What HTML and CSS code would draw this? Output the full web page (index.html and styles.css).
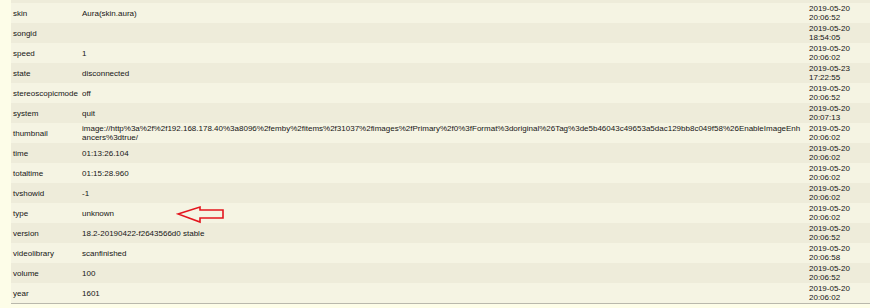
FILE: index.html
```html
<!DOCTYPE html>
<html>
<head>
<meta charset="utf-8">
<link rel="stylesheet" href="styles.css">
</head>
<body>
<div class="page">
  <table class="props">
    <colgroup>
      <col class="c-key">
      <col class="c-val">
      <col class="c-date">
    </colgroup>
    <tbody>
      <tr class="cut"><td></td><td></td><td></td></tr>
      <tr><td>skin</td><td>Aura(skin.aura)</td><td>2019-05-20<br>20:06:52</td></tr>
      <tr><td>songid</td><td></td><td>2019-05-20<br>18:54:05</td></tr>
      <tr><td>speed</td><td>1</td><td>2019-05-20<br>20:06:02</td></tr>
      <tr><td>state</td><td>disconnected</td><td>2019-05-23<br>17:22:55</td></tr>
      <tr><td>stereoscopicmode</td><td>off</td><td>2019-05-20<br>20:06:52</td></tr>
      <tr><td>system</td><td>quit</td><td>2019-05-20<br>20:07:13</td></tr>
      <tr><td>thumbnail</td><td class="wrap">image://http%3a%2f%2f192.168.178.40%3a8096%2femby%2fitems%2f31037%2fimages%2fPrimary%2f0%3fFormat%3doriginal%26Tag%3de5b46043c49653a5dac129bb8c049f58%26EnableImageEnhancers%3dtrue/</td><td>2019-05-20<br>20:06:02</td></tr>
      <tr><td>time</td><td>01:13:26.104</td><td>2019-05-20<br>20:06:02</td></tr>
      <tr><td>totaltime</td><td>01:15:28.960</td><td>2019-05-20<br>20:06:02</td></tr>
      <tr><td>tvshowid</td><td>-1</td><td>2019-05-20<br>20:06:02</td></tr>
      <tr><td>type</td><td>unknown</td><td>2019-05-20<br>20:06:02</td></tr>
      <tr><td>version</td><td>18.2-20190422-f2643566d0 stable</td><td>2019-05-20<br>20:06:52</td></tr>
      <tr><td>videolibrary</td><td>scanfinished</td><td>2019-05-20<br>20:06:58</td></tr>
      <tr><td>volume</td><td>100</td><td>2019-05-20<br>20:06:52</td></tr>
      <tr class="last"><td>year</td><td>1601</td><td>2019-05-20<br>20:06:02</td></tr>
    </tbody>
  </table>
  <svg class="arrow" width="50" height="19" viewBox="0 0 50 19">
    <polygon points="2,9 24,2 24,5 47,5 47,13 24,13 24,17" fill="none" stroke="#e3161e" stroke-width="1.6" stroke-linejoin="miter"/>
  </svg>
</div>
</body>
</html>
```

FILE: styles.css
```css
html, body {
  margin: 0;
  padding: 0;
  background: #fdfde8;
  overflow: hidden;
}

.page {
  position: relative;
  padding-left: 11px;
  font-family: "Liberation Sans", Arial, sans-serif;
  font-size: 8px;
  color: #151515;
}

.props {
  width: 859px;
  border-collapse: collapse;
  border-spacing: 0;
  table-layout: fixed;
}

.c-key { width: 69px; }
.c-val { width: 727px; }
.c-date { width: 63px; }

.props td {
  padding: 1px 4px 1px 2px;
  line-height: 9px;
  height: 18px;
  vertical-align: middle;
  white-space: nowrap;
  overflow: hidden;
}

.props td.wrap {
  white-space: normal;
  word-break: break-all;
}

.props tr:nth-child(odd) { background: #eeecda; }
.props tr:nth-child(even) { background: #f5f4e3; }

.props tr.cut td {
  height: 3px;
  padding: 0;
  line-height: 0;
}

.props tr.last td {
  border-bottom: 1px solid #b9b8ac;
}

.arrow {
  position: absolute;
  left: 176px;
  top: 205px;
}
```
